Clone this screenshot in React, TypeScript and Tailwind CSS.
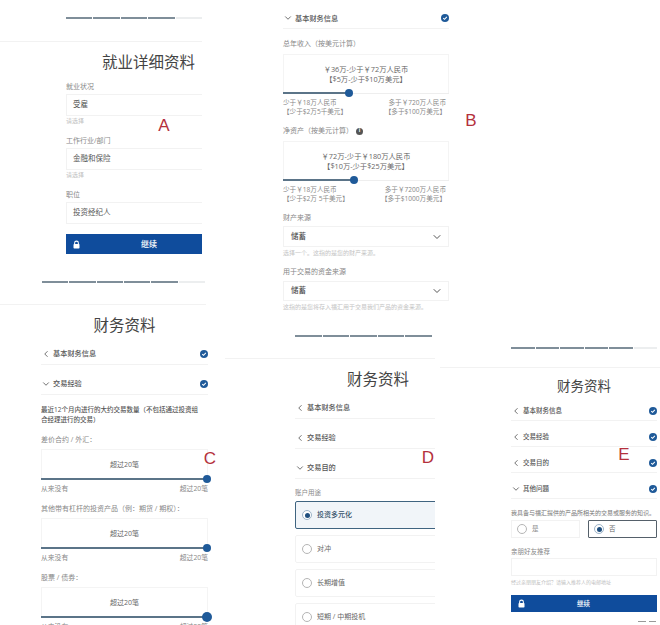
import React from 'react';
import { ChevronDown, ChevronLeft } from 'lucide-react';

const Progress = ({ done, total = 5, className }: { done: number; total?: number; className: string }) => (
  <div className={`flex h-[2px] gap-px ${className}`}>
    {Array.from({ length: total }).map((_, i) => (
      <div key={i} className={`flex-1 ${i < done ? 'bg-[#7f8e99]' : 'bg-[#eceeef]'}`} />
    ))}
  </div>
);

const Check = () => (
  <svg viewBox="0 0 10 10" className="w-[8px] h-[8px] shrink-0">
    <circle cx="5" cy="5" r="5" fill="#1f5a99" />
    <path d="M2.8 5.2 4.4 6.7 7.3 3.6" fill="none" stroke="#fff" strokeWidth="1.3" />
  </svg>
);

const Lock = () => (
  <svg viewBox="0 0 12 12" className="w-[9px] h-[9px] shrink-0">
    <path d="M3.5 5.5V4a2.5 2.5 0 0 1 5 0v1.5" fill="none" stroke="#fff" strokeWidth="1.4" />
    <rect x="2" y="5.2" width="8" height="6" rx="1" fill="#fff" />
  </svg>
);

const AccRow = ({
  title,
  open,
  check = true,
  small,
  className = '',
}: {
  title: string;
  open?: boolean;
  check?: boolean;
  small?: boolean;
  className?: string;
}) => (
  <div className={`flex items-center border-b border-[#f2f2f2] ${className}`}>
    {open ? (
      <ChevronDown className="w-[10px] h-[10px] text-[#555] shrink-0" />
    ) : (
      <ChevronLeft className="w-[10px] h-[10px] text-[#555] shrink-0" />
    )}
    <span className={`ml-[2px] flex-1 font-medium text-[#555] ${small ? 'text-[6.5px]' : 'text-[7.2px]'}`}>{title}</span>
    {check && <Check />}
  </div>
);

const Slider = ({ fill, big }: { fill: string; big?: boolean }) => (
  <div className="flex items-center h-[10px] -mt-[5px]">
    <div className={`h-[2px] shrink-0 bg-[#5b7488] ${fill}`} />
    <div className={`shrink-0 z-10 rounded-full bg-[#1f5a99] ${big ? 'w-[10px] h-[10px] -mx-[5px]' : 'w-[8px] h-[8px] -mx-[4px]'}`} />
    <div className="h-px flex-1 bg-[#eeeeee]" />
  </div>
);

const SlideBox = ({ lines, className }: { lines: string[]; className: string }) => (
  <div className={`flex flex-col items-center justify-center border border-b-0 border-[#f4f4f4] leading-[10px] text-[#666] ${className}`}>
    {lines.map((l) => (
      <div key={l}>{l}</div>
    ))}
  </div>
);

const Select = ({ className }: { className: string }) => (
  <div className={`flex items-center justify-between border border-[#f2f2f2] pl-[7px] pr-[5px] text-[7.5px] font-medium text-[#555] ${className}`}>
    <span>储蓄</span>
    <ChevronDown className="w-[12px] h-[12px] text-[#555]" />
  </div>
);

const Radio = ({ on }: { on?: boolean }) => (
  <div className={`flex items-center justify-center w-[10px] h-[10px] shrink-0 rounded-full border ${on ? 'border-[#9db4c8] bg-white' : 'border-[#b5b5b5] bg-white'}`}>
    {on && <div className="w-[5px] h-[5px] rounded-full bg-[#1f4f7f]" />}
  </div>
);

const Letter = ({ ch, className }: { ch: string; className: string }) => (
  <div className={`absolute w-[14px] h-[20px] leading-[20px] text-center text-[17px] text-[#b4303c] font-['Liberation_Sans',sans-serif] ${className}`}>
    {ch}
  </div>
);

const PanelA = () => (
  <div className="absolute left-0 top-0 w-[206px] pt-[17px]">
    <Progress done={4} className="ml-[66px] w-[136px]" />
    <div className="mt-[22px] w-[202px] border-t border-[#f2f2f2]" />
    <div className="mt-[8px] ml-[66px] w-[136px] h-[24px] leading-[24px] pl-[36px] text-[15.5px] text-[#444] whitespace-nowrap">就业详细资料</div>
    <div className="ml-[66px] w-[136px]">
      <div className="mt-[7px] h-[12px] leading-[12px] text-[7px] text-[#888]">就业状况</div>
      <div className="mt-px h-[22px] flex items-center pl-[6px] border border-r-0 border-[#f2f2f2] text-[7.5px] text-[#555]">受雇</div>
      <div className="h-[10px] leading-[10px] text-[6px] text-[#c0c0c0]">请选择</div>
      <div className="mt-[9px] h-[12px] leading-[12px] text-[7px] text-[#888]">工作行业/部门</div>
      <div className="mt-px h-[22px] flex items-center pl-[6px] border border-r-0 border-[#f2f2f2] text-[7.5px] text-[#555]">金融和保险</div>
      <div className="h-[10px] leading-[10px] text-[6px] text-[#c0c0c0]">请选择</div>
      <div className="mt-[9px] h-[12px] leading-[12px] text-[7px] text-[#888]">职位</div>
      <div className="mt-px h-[22px] flex items-center pl-[6px] border border-r-0 border-[#f2f2f2] text-[7.5px] text-[#555]">投资经纪人</div>
      <div className="mt-[10px] h-[20px] flex items-center pl-[6px] bg-[#0f4c9c] text-white text-[8px] font-medium">
        <Lock />
        <span className="ml-[60px]">继续</span>
      </div>
    </div>
    <Progress done={5} total={6} className="mt-[27px] ml-[42px] w-[163px]" />
    <div className="mt-[21px] border-t border-[#f2f2f2]" />
  </div>
);

const PanelB = () => (
  <div className="absolute left-[225px] top-[8px] w-[225px]">
    <div className="ml-[58px] w-[166px]">
      <AccRow title="基本财务信息" open className="h-[21px]" />
      <div className="mt-[9px] h-[12px] leading-[12px] text-[7px] text-[#888]">总年收入（按美元计算）</div>
      <SlideBox lines={['￥36万-少于￥72万人民币', '【$5万-少于$10万美元】']} className="mt-[4px] h-[39px] text-[7.3px]" />
      <Slider fill="w-[66px]" />
      <div className="flex justify-between h-[18px] pr-[3px] text-[6.6px] leading-[9px] text-[#888]">
        <div>少于￥18万人民币<br />【少于$2万5千美元】</div>
        <div className="text-right">多于￥720万人民币<br />【多于$100万美元】</div>
      </div>
      <div className="mt-[9px] h-[12px] flex items-center gap-[3px] text-[7px] text-[#888]">
        净资产（按美元计算）
        <span className="flex items-center justify-center w-[7px] h-[7px] rounded-full bg-[#555] text-white text-[5px] font-bold">i</span>
      </div>
      <SlideBox lines={['￥72万-少于￥180万人民币', '【$10万-少于$25万美元】']} className="mt-[4px] h-[39px] text-[7.3px]" />
      <Slider fill="w-[71px]" />
      <div className="flex justify-between h-[18px] pr-[3px] text-[6.6px] leading-[9px] text-[#888]">
        <div>少于￥18万人民币<br />【少于$2万 5千美元】</div>
        <div className="text-right">多于￥7200万人民币<br />【多于$1000万美元】</div>
      </div>
      <div className="mt-[9px] h-[12px] leading-[12px] text-[7px] text-[#888]">财产来源</div>
      <Select className="mt-[2px] h-[21px]" />
      <div className="mt-px h-[10px] leading-[10px] text-[6px] text-[#c4c4c4]">选择一个。这指的是您的财产来源。</div>
      <div className="mt-[8px] h-[12px] leading-[12px] text-[7px] text-[#888]">用于交易的资金来源</div>
      <Select className="mt-[3px] h-[20px]" />
      <div className="mt-px h-[10px] leading-[10px] text-[6px] text-[#c4c4c4] whitespace-nowrap">这指的是您将存入福汇用于交易我们产品的资金来源。</div>
      <Progress done={5} className="mt-[23px] ml-[12px] w-[137px]" />
    </div>
    <div className="mt-[21px] w-[210px] border-t border-[#f2f2f2]" />
  </div>
);

const tradeGroups = ['差价合约 / 外汇：', '其他带有杠杆的投资产品（例：期货 / 期权）：', '股票 / 债券：'];

const PanelC = () => (
  <div className="absolute left-[41px] top-[313px] w-[173px] h-[312px] overflow-hidden">
    <div className="w-[167px]">
      <div className="h-[24px] leading-[24px] text-center text-[15.5px] text-[#444]">财务资料</div>
      <AccRow title="基本财务信息" className="mt-[6px] h-[22px]" />
      <AccRow title="交易经验" open className="mt-[8px] h-[22px]" />
      <p className="mt-[10px] h-[20px] text-[6.5px] leading-[10px] font-medium text-[#555]">
        最近12个月内进行的大约交易数量（不包括通过投资组<br />合经理进行的交易）
      </p>
      {tradeGroups.map((g, i) => (
        <div key={g} className="mt-[9px]">
          <div className="h-[12px] leading-[12px] text-[7px] text-[#888] whitespace-nowrap">{g}</div>
          <SlideBox lines={['超过20笔']} className="mt-[3px] h-[30px] text-[7px]" />
          <Slider fill="w-[166px]" big={i === 2} />
          <div className="flex justify-between h-[10px] leading-[10px] text-[6.8px] text-[#888]">
            <span>从来没有</span>
            <span>超过20笔</span>
          </div>
        </div>
      ))}
    </div>
  </div>
);

const PanelD = () => (
  <div className="absolute left-[295px] top-[367px] w-[140px] h-[258px] overflow-hidden">
    <div className="ml-[26px] h-[24px] leading-[24px] text-center text-[15.5px] text-[#444]">财务资料</div>
    <AccRow title="基本财务信息" check={false} className="mt-[6px] h-[22px]" />
    <AccRow title="交易经验" check={false} className="mt-[8px] h-[22px]" />
    <AccRow title="交易目的" open check={false} className="mt-[8px] h-[22px]" />
    <div className="mt-[8px] h-[12px] leading-[12px] text-[6.5px] text-[#888]">账户用途</div>
    <div className="mt-[2px] flex flex-col gap-[6px] w-[150px]">
      {['投资多元化', '对冲', '长期增值', '短期 / 中期投机'].map((t, i) => (
        <div
          key={t}
          className={`flex items-center gap-[5px] h-[28px] shrink-0 pl-[6px] rounded-[2px] border text-[7px] ${
            i === 0 ? 'border-[#3f6480] bg-[#f1f5f9] text-[#35526b] font-medium' : 'border-[#f2f2f2] text-[#666]'
          }`}
        >
          <Radio on={i === 0} />
          {t}
        </div>
      ))}
    </div>
  </div>
);

const PanelE = () => (
  <div className="absolute left-[440px] top-[347px] w-[220px] h-[278px] overflow-hidden">
    <Progress done={5} total={6} className="ml-[71px] w-[146px]" />
    <div className="mt-[18px] border-t border-[#f2f2f2]" />
    <div className="ml-[71px] w-[146px]">
      <div className="mt-[6px] h-[24px] leading-[24px] text-center text-[13.5px] text-[#444]">财务资料</div>
      <AccRow title="基本财务信息" small className="mt-[4px] h-[19px]" />
      <AccRow title="交易经验" small className="mt-[7px] h-[19px]" />
      <AccRow title="交易目的" small className="mt-[7px] h-[19px]" />
      <AccRow title="其他问题" small open className="mt-[7px] h-[19px]" />
      <div className="mt-[8px] h-[12px] leading-[12px] text-[6px] text-[#777] whitespace-nowrap">我具备与福汇提供的产品所相关的交易或服务的知识。</div>
      <div className="mt-px flex gap-[9px]">
        <div className="flex-1 h-[18px] flex items-center gap-[5px] pl-[5px] border border-[#f2f2f2] text-[6.5px] text-[#888]">
          <Radio />是
        </div>
        <div className="flex-1 h-[18px] flex items-center gap-[5px] pl-[5px] -ml-px border border-[#55606a] rounded-[1px] text-[6.5px] text-[#666]">
          <Radio on />否
        </div>
      </div>
      <div className="mt-[8px] h-[12px] leading-[12px] text-[6.5px] text-[#888]">亲朋好友推荐</div>
      <div className="h-[18px] border border-[#f2f2f2]" />
      <div className="mt-px h-[10px] leading-[10px] text-[5px] text-[#c0c0c0] whitespace-nowrap">经过亲朋朋友介绍？请输入推荐人的电邮地址</div>
      <div className="mt-[8px] h-[17px] flex items-center pl-[6px] bg-[#0f4c9c] text-white text-[6.5px] font-medium">
        <Lock />
        <span className="ml-[51px]">继续</span>
      </div>
      <div className="mt-[9px] flex justify-end gap-[3px] pr-px">
        <div className="w-[8px] h-px bg-[#999]" />
        <div className="w-[7px] h-px bg-[#999]" />
      </div>
    </div>
  </div>
);

export default function App() {
  return (
    <div className="relative w-[660px] h-[625px] overflow-hidden bg-white font-['Open_Sans','Noto_Sans_CJK_SC',sans-serif]">
      <PanelA />
      <PanelB />
      <PanelC />
      <PanelD />
      <PanelE />
      <Letter ch="A" className="left-[157px] top-[116px]" />
      <Letter ch="B" className="left-[464px] top-[111px]" />
      <Letter ch="C" className="left-[203px] top-[449px]" />
      <Letter ch="D" className="left-[421px] top-[448px]" />
      <Letter ch="E" className="left-[617px] top-[445px]" />
    </div>
  );
}
